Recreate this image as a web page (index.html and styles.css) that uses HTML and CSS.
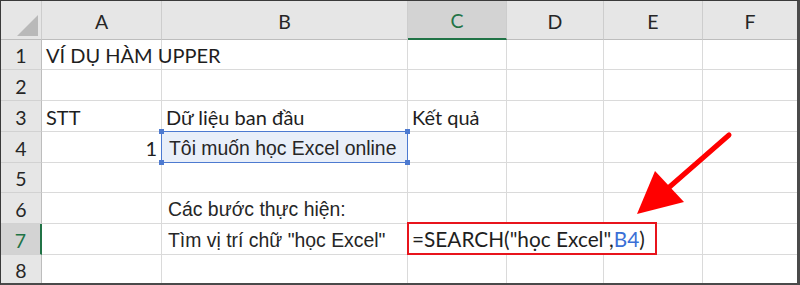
FILE: index.html
```html
<!DOCTYPE html>
<html lang="vi">
<head>
<meta charset="utf-8">
<title>Excel SEARCH</title>
<link rel="stylesheet" href="styles.css">
</head>
<body>
<div class="frame">
  <div class="sheet">
    <div class="hd corner"><span class="tri"></span></div>
    <div class="hd col">A</div>
    <div class="hd col">B</div>
    <div class="hd col active-col">C</div>
    <div class="hd col">D</div>
    <div class="hd col">E</div>
    <div class="hd col last">F</div>

    <div class="hd row">1</div>
    <div class="cell">VÍ DỤ HÀM UPPER</div>
    <div class="cell"></div><div class="cell"></div><div class="cell"></div><div class="cell"></div><div class="cell last"></div>

    <div class="hd row">2</div>
    <div class="cell"></div><div class="cell"></div><div class="cell"></div><div class="cell"></div><div class="cell"></div><div class="cell last"></div>

    <div class="hd row">3</div>
    <div class="cell">STT</div>
    <div class="cell">Dữ liệu ban đầu</div>
    <div class="cell">Kết quả</div>
    <div class="cell"></div><div class="cell"></div><div class="cell last"></div>

    <div class="hd row">4</div>
    <div class="cell num">1</div>
    <div class="cell sel arial">Tôi muốn học Excel online
      <i class="h h-tl"></i><i class="h h-tr"></i><i class="h h-bl"></i><i class="h h-br"></i>
    </div>
    <div class="cell"></div><div class="cell"></div><div class="cell"></div><div class="cell last"></div>

    <div class="hd row">5</div>
    <div class="cell"></div><div class="cell"></div><div class="cell"></div><div class="cell"></div><div class="cell"></div><div class="cell last"></div>

    <div class="hd row">6</div>
    <div class="cell"></div>
    <div class="cell arial">Các bước thực hiện:</div>
    <div class="cell"></div><div class="cell"></div><div class="cell"></div><div class="cell last"></div>

    <div class="hd row active-row">7</div>
    <div class="cell"></div>
    <div class="cell arial">Tìm vị trí chữ "học Excel"</div>
    <div class="cell open"><span class="formula">=SEARCH("học Excel",<b class="ref">B4</b>)</span></div>
    <div class="cell open"></div><div class="cell"></div><div class="cell last"></div>

    <div class="hd row bottom">8</div>
    <div class="cell bottom"></div><div class="cell bottom"></div><div class="cell bottom"></div><div class="cell bottom"></div><div class="cell bottom"></div><div class="cell bottom last"></div>
  </div>
  <svg class="arrow" width="800" height="285" viewBox="0 0 800 285">
    <line x1="729" y1="135" x2="666" y2="190" stroke="#ff0000" stroke-width="5" stroke-linecap="round"/>
    <polygon points="637,214 655,171 684,202" fill="#ff0000"/>
  </svg>
</div>
</body>
</html>
```

FILE: styles.css
```css
html, body {
  margin: 0;
  padding: 0;
  background: #ffffff;
}

.frame {
  position: relative;
  width: 800px;
  height: 285px;
  box-sizing: border-box;
  border-top: 1px solid #3a3a3a;
  border-left: 1px solid #3a3a3a;
  border-right: 3px solid #4a4a4a;
  border-bottom: 2px solid #4a4a4a;
  background: #ffffff;
  overflow: hidden;
  font-family: Lato, "Liberation Sans", sans-serif;
  color: #1e1e1e;
}

.sheet {
  display: grid;
  grid-template-columns: 41px 120px 246px 99px 97px 99px 94px;
  grid-template-rows: 39px 30px 31px 31px 31px 30px 31px 31px 30px;
}

.hd {
  background: #e6e6e6;
  color: #262626;
  font-size: 19.5px;
  display: flex;
  align-items: center;
  justify-content: center;
  box-sizing: border-box;
}

.hd.col {
  border-right: 1px solid #cdcdcd;
  border-bottom: 1px solid #bdbdbd;
  padding-top: 2px;
}

.hd.col.last {
  border-right: none;
}

.hd.corner {
  position: relative;
  border-right: 1px solid #cdcdcd;
  border-bottom: 1px solid #bdbdbd;
}

.tri {
  position: absolute;
  right: 3px;
  bottom: 3px;
  width: 0;
  height: 0;
  border-left: 21px solid transparent;
  border-bottom: 21px solid #b9b9b9;
}

.hd.row {
  border-right: 1px solid #bdbdbd;
  border-bottom: 1px solid #d2d2d2;
  padding-top: 2px;
}

.hd.active-col {
  background: #d3d3d3;
  color: #217346;
  border-bottom: 2px solid #217346;
}

.hd.active-row {
  background: #d3d3d3;
  color: #217346;
  border-right: 2px solid #217346;
}

.cell {
  box-sizing: border-box;
  border-right: 1px solid #dadada;
  border-bottom: 1px solid #dadada;
  font-size: 20px;
  line-height: 20px;
  padding: 0 4px 4px 4px;
  display: flex;
  align-items: flex-end;
  white-space: nowrap;
  overflow: visible;
}

.cell.arial {
  font-family: "Liberation Sans", Arial, sans-serif;
  font-size: 19.4px;
  color: #262626;
  padding-left: 6px;
}

.cell.last {
  border-right: none;
}

.cell.open {
  border-right: none;
}

.cell.num {
  justify-content: flex-end;
}

.cell.sel {
  position: relative;
  background: #e9eff9;
  border: 1.5px solid #4d7ad0;
  margin: -1px 0 0 -1px;
  padding-left: 7px;
}

.h {
  position: absolute;
  width: 5px;
  height: 5px;
  background: #4d7ad0;
}

.h-tl { left: -3px; top: -3px; }
.h-tr { right: -3px; top: -3px; }
.h-bl { left: -3px; bottom: -3px; }
.h-br { right: -3px; bottom: -3px; }

.formula {
  position: relative;
  z-index: 1;
  display: flex;
  align-items: flex-end;
  box-sizing: border-box;
  height: 33px;
  margin: 0 0 -5px -5px;
  padding: 0 10px 4px 3px;
  border: 2px solid #e8141c;
  background: #ffffff;
  font-size: 20.8px;
}

.ref {
  font-weight: normal;
  color: #3a6fd6;
}

.arrow {
  position: absolute;
  left: -1px;
  top: -1px;
  z-index: 2;
  pointer-events: none;
}
```
